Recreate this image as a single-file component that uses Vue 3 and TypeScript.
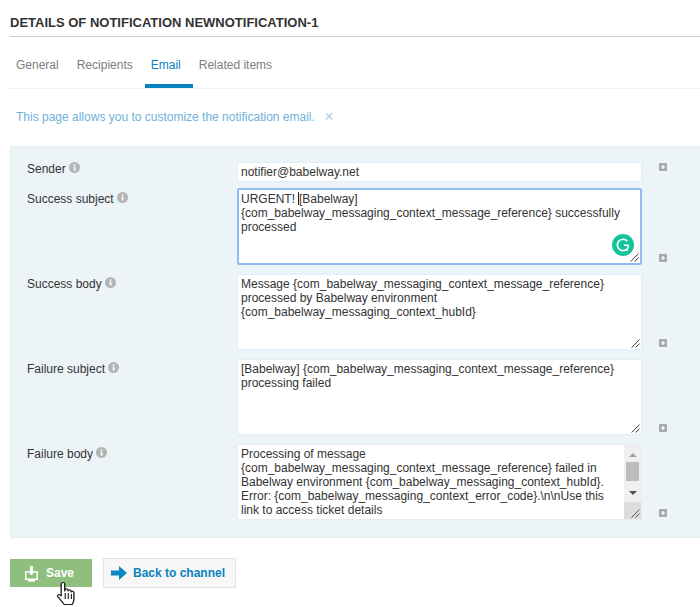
<script setup lang="ts">
interface Field {
  label: string
  lines: string[]
  single?: boolean
  focused?: boolean
  scroll?: boolean
  caret?: boolean
}
const fields: Field[] = [
  { label: 'Sender', lines: ['notifier@babelway.net'], single: true },
  {
    label: 'Success subject',
    focused: true,
    caret: true,
    lines: ['URGENT! [Babelway]', '{com_babelway_messaging_context_message_reference} successfully', 'processed'],
  },
  {
    label: 'Success body',
    lines: ['Message {com_babelway_messaging_context_message_reference}', 'processed by Babelway environment', '{com_babelway_messaging_context_hubId}'],
  },
  {
    label: 'Failure subject',
    lines: ['[Babelway] {com_babelway_messaging_context_message_reference}', 'processing failed'],
  },
  {
    label: 'Failure body',
    scroll: true,
    lines: [
      'Processing of message',
      '{com_babelway_messaging_context_message_reference} failed in',
      'Babelway environment {com_babelway_messaging_context_hubId}.',
      'Error: {com_babelway_messaging_context_error_code}.\\n\\nUse this',
      'link to access ticket details',
    ],
  },
]
const tabs = ['General', 'Recipients', 'Email', 'Related items']
</script>

<template>
  <div class="page">
    <h1 class="title">DETAILS OF NOTIFICATION NEWNOTIFICATION-1</h1>
    <nav class="tabs">
      <span v-for="t in tabs" :key="t" class="tab" :class="{ active: t === 'Email' }">{{ t }}</span>
    </nav>
    <p class="hint">
      This page allows you to customize the notification email.
      <span class="close">×</span>
    </p>
    <section class="panel">
      <div v-for="f in fields" :key="f.label" class="row" :class="{ tall: !f.single }">
        <div class="label">
          {{ f.label }}
          <svg class="info" width="11" height="11" viewBox="0 0 11 11">
            <circle cx="5.5" cy="5.5" r="5.5" fill="#b4b4b4" />
            <rect x="4.7" y="4.6" width="1.7" height="4" fill="#fff" />
            <rect x="4.7" y="2.3" width="1.7" height="1.5" fill="#fff" />
          </svg>
        </div>
        <div class="box" :class="{ single: f.single, focused: f.focused, scrolled: f.scroll }">
          <div class="text">
            <div v-for="(l, i) in f.lines" :key="i" class="line">
              <template v-if="f.caret && i === 0">URGENT!<span class="caret"></span>[Babelway]</template>
              <template v-else>{{ l }}</template>
            </div>
          </div>
          <svg v-if="f.focused" class="grammarly" width="22" height="22" viewBox="0 0 22 22">
            <circle cx="11" cy="11" r="11" fill="#15c39a" />
            <path d="M15.4 7.2A5.7 5.7 0 1 0 16.7 11.8" fill="none" stroke="#fff" stroke-width="1.6" />
            <path d="M11.8 11.3H16.7" fill="none" stroke="#fff" stroke-width="1.6" />
            <path d="M16 13.4v3.4h-3.2z" fill="#fff" />
          </svg>
          <div v-if="f.scroll" class="scrollbar">
            <span class="arrow up"></span>
            <span class="thumb"></span>
            <span class="arrow down"></span>
          </div>
          <div v-if="f.scroll" class="corner"></div>
          <svg v-if="!f.single" class="grip" width="9" height="9" viewBox="0 0 9 9">
            <path d="M0.5 8.5L8.5 0.5M4.5 8.5L8.5 4.5" stroke="#555" stroke-width="1" fill="none" />
            <path d="M1.5 8.5L8.5 1.5M5.5 8.5L8.5 5.5" stroke="#ddd" stroke-width="1" fill="none" />
          </svg>
        </div>
        <svg class="plus" width="8" height="8" viewBox="0 0 8 8">
          <rect width="8" height="8" rx="1" fill="#a9a9a9" />
          <path d="M4 2v4M2 4h4" stroke="#fff" stroke-width="1.2" />
        </svg>
      </div>
    </section>
    <div class="actions">
      <button class="btn save" type="button">
        <svg width="13" height="17" viewBox="0 0 13 17">
          <path d="M3 7H.8v7.2h11.4V7H10" fill="none" stroke="#fff" stroke-width="1.5" />
          <path d="M5 1h3v5h2.6L6.5 10.6 2.4 6H5z" fill="#fff" />
          <rect x="3" y="15" width="7" height="1.6" fill="#fff" />
        </svg>
        Save
      </button>
      <button class="btn back" type="button">
        <svg width="16" height="14" viewBox="0 0 16 14">
          <path d="M0 4.5h8V0l8 7-8 7V9.5H0z" fill="#0a86c0" />
        </svg>
        Back to channel
      </button>
      <svg class="hand" width="23" height="26" viewBox="0 0 20 26" preserveAspectRatio="none">
        <path
          d="M6 1.5c1 0 1.6.8 1.6 1.8V10l.3-1.6c1-.9 2.2-.4 2.4.6l.2 1 .3-.7c1-.7 2.1-.2 2.3.8l.1.9.4-.4c1-.5 2 .1 2 1.2v6.4c0 2-.6 3.4-1.6 5.3H7.2L1.6 15.6c-.8-1.2.7-2.7 2-1.7l.9 1V3.3c0-1 .6-1.8 1.5-1.8z"
          fill="#fff" stroke="#222" stroke-width="1.2" stroke-linejoin="round" />
        <path d="M8 12v6M10.7 12v6M13.4 13v5" stroke="#222" stroke-width="1" fill="none" />
      </svg>
    </div>
  </div>
</template>

<style scoped>
.page {
  position: relative;
  width: 700px;
  height: 607px;
  overflow: hidden;
  background: #fff;
  font-family: "Liberation Sans", Arial, sans-serif;
  font-size: 12px;
  color: #333;
}
.title {
  margin: 0 0 0 10px;
  height: 37px;
  box-sizing: border-box;
  padding-top: 15px;
  line-height: 15px;
  font-size: 13px;
  font-weight: 700;
  color: #333;
  border-bottom: 1px solid #c9ced1;
}
.tabs {
  display: flex;
  margin-left: 10px;
  height: 52px;
  box-sizing: border-box;
  border-bottom: 1px solid #f0f0f0;
}
.tab {
  padding: 21px 12px 0 6px;
  line-height: 14px;
  color: #7d7d7d;
  height: 51px;
  box-sizing: border-box;
}
.tab.active {
  color: #0a82bd;
  border-bottom: 4px solid #0a82bd;
}
.hint {
  margin: 0;
  padding: 21px 0 0 16px;
  height: 57px;
  box-sizing: border-box;
  line-height: 14px;
  color: #6fb0da;
}
.close {
  margin-left: 6px;
  color: #b4d0e2;
  font-size: 16px;
  line-height: 14px;
  vertical-align: -1px;
}
.panel {
  margin-left: 10px;
  height: 392px;
  box-sizing: border-box;
  padding-top: 15px;
  background: #edf4f8;
  border: 1px solid #e2edf3;
  border-right: 0;
}
.row {
  display: grid;
  grid-template-columns: 209px 405px auto;
  column-gap: 17px;
  align-items: start;
  margin-bottom: 9px;
}
.row:first-child {
  margin-bottom: 6px;
}
.label {
  padding: 3px 0 0 16px;
  line-height: 14px;
  color: #333;
}
.row:first-child .label {
  padding-top: 0;
}
.row:nth-child(2) .label {
  padding-top: 4px;
}
.info {
  margin-left: 0;
  vertical-align: 0;
}
.box {
  position: relative;
  height: 76px;
  box-sizing: border-box;
  background: #fff;
  border: 1px solid #e3edf3;
  padding: 2px 3px;
  overflow: hidden;
  color: #333;
}
.box.single {
  height: 20px;
  padding-top: 2px;
}
.box.focused {
  height: 77px;
  border: 2px solid #8fbcf5;
  border-radius: 2px;
  padding: 2px 2px;
}
.line {
  line-height: 14px;
  white-space: nowrap;
}
.caret {
  display: inline-block;
  width: 1px;
  height: 13px;
  margin: 0 0 -2px 3px;
  background: #222;
}
.grammarly {
  position: absolute;
  right: 6px;
  bottom: 7px;
}
.grip {
  position: absolute;
  right: 1px;
  bottom: 1px;
}
.scrollbar {
  position: absolute;
  top: 0;
  right: 0;
  bottom: 0;
  width: 17px;
  background: #f0f0f0;
}
.corner {
  position: absolute;
  right: 0;
  bottom: 0;
  width: 17px;
  height: 17px;
  background: #dcdcdc;
}
.thumb {
  position: absolute;
  left: 2px;
  top: 17px;
  width: 13px;
  height: 19px;
  background: #bdbdbd;
}
.arrow {
  position: absolute;
  left: 5px;
  width: 0;
  height: 0;
  border-left: 4px solid transparent;
  border-right: 4px solid transparent;
}
.arrow.up {
  top: 8px;
  border-bottom: 4px solid #a3a3a3;
}
.arrow.down {
  top: 46px;
  border-top: 4px solid #505050;
}
.plus {
  align-self: end;
  margin-bottom: 3px;
}
.row:first-child .plus {
  align-self: start;
  margin: 1px 0 0;
}
.actions {
  position: relative;
  display: flex;
  align-items: center;
  gap: 11px;
  margin: 20px 0 0 10px;
}
.btn {
  display: flex;
  align-items: center;
  font: 700 12px "Liberation Sans", Arial, sans-serif;
  box-sizing: border-box;
  padding: 0;
}
.save {
  width: 82px;
  height: 28px;
  padding-left: 15px;
  gap: 8px;
  color: #fff;
  background: #8fbf7f;
  border: 0;
}
.back {
  width: 133px;
  height: 30px;
  padding-left: 7px;
  gap: 6px;
  color: #0a82bd;
  background: #f7f7f7;
  border: 1px solid #e3e3e3;
}
.hand {
  position: absolute;
  left: 46px;
  top: 23px;
}
</style>
